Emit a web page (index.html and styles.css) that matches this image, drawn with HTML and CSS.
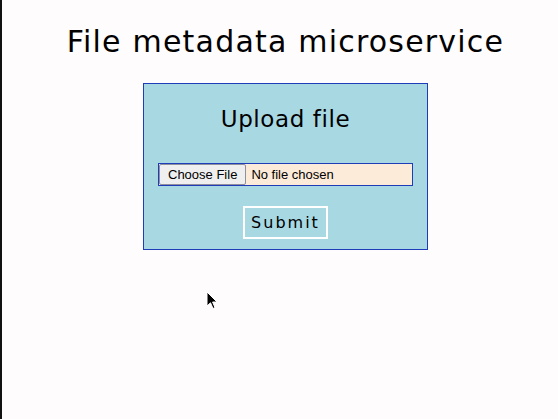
FILE: index.html
```html
<!DOCTYPE html>
<html lang="en">
<head>
<meta charset="utf-8">
<title>File metadata microservice</title>
<link rel="stylesheet" href="styles.css">
</head>
<body>
<main class="page">
  <h1 class="title">File metadata microservice</h1>
  <form class="card">
    <h2 class="card-title">Upload file</h2>
    <input class="file-input" type="file" name="upfile">
    <button class="submit" type="button">Submit</button>
  </form>
</main>
<svg class="cursor" width="12" height="19" viewBox="0 0 12 19" aria-hidden="true">
  <path d="M1 1 L1 15 L4.5 11.8 L7 17.5 L9 16.6 L6.6 11 L11 11 Z" fill="#000" stroke="#fff" stroke-width="1"/>
</svg>
</body>
</html>
```
FILE: styles.css
```css
html, body {
  margin: 0;
  padding: 0;
  height: 100%;
}
body {
  background: #fffcfd;
  border-left: 2px solid #111;
  box-sizing: border-box;
  font-family: "DejaVu Sans", "Open Sans", sans-serif;
  color: #000;
  position: relative;
  overflow: hidden;
}
.page {
  padding-left: 11px;
  display: flex;
  flex-direction: column;
  align-items: center;
}
.title {
  margin: 22px 0 0;
  font-size: 30px;
  font-weight: normal;
  letter-spacing: 1.2px;
  line-height: 40px;
  height: 40px;
}
.card {
  margin-top: 21px;
  width: 285px;
  height: 167px;
  box-sizing: border-box;
  background: #a8d8e2;
  border: 1px solid #1f3db8;
  display: flex;
  flex-direction: column;
  align-items: center;
}
.card-title {
  margin: 20px 0 0;
  font-size: 23px;
  font-weight: normal;
  letter-spacing: 0.6px;
  line-height: 30px;
  height: 30px;
}
.file-input {
  margin-top: 29px;
  width: 255px;
  height: 23px;
  box-sizing: border-box;
  background: #fdebd9;
  border: 1px solid #1f3db8;
  font-family: "Liberation Sans", Arial, sans-serif;
  font-size: 13px;
  padding: 0;
}
.file-input::file-selector-button {
  font-family: "Liberation Sans", Arial, sans-serif;
  font-size: 13px;
  height: 21px;
  margin: 0 5px 0 0;
  padding: 0 8px;
  background: #efefef;
  border: 1px solid #8f8f9d;
  border-radius: 2px;
  color: #000;
}
.submit {
  margin-top: 20px;
  width: 85px;
  height: 33px;
  box-sizing: border-box;
  background: transparent;
  border: 2px solid #fff;
  font-family: "DejaVu Sans", "Open Sans", sans-serif;
  font-size: 16px;
  letter-spacing: 2px;
  color: #000;
  padding: 0;
}
.cursor {
  position: absolute;
  left: 204px;
  top: 291px;
}
```
